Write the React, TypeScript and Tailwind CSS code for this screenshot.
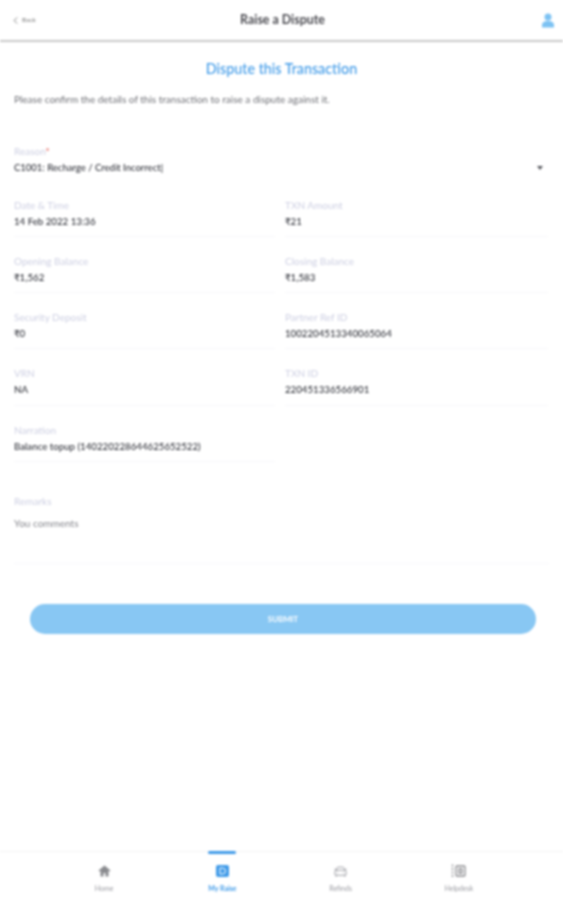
import { ChevronLeft, CarFront } from "lucide-react";

const FIELDS = [
  { label: "Date & Time", value: "14 Feb 2022 13:36" },
  { label: "TXN Amount", value: "₹21" },
  { label: "Opening Balance", value: "₹1,562" },
  { label: "Closing Balance", value: "₹1,583" },
  { label: "Security Deposit", value: "₹0" },
  { label: "Partner Ref ID", value: "1002204513340065064" },
  { label: "VRN", value: "NA" },
  { label: "TXN ID", value: "220451336566901" },
];

function Field({ label, value }: { label: string; value: string }) {
  return (
    <div className="h-[56.25px] border-b border-[#f7f7fa] pt-[18px]">
      <p className="text-[10px] leading-[12px] text-[#cdcfe2]">{label}</p>
      <p className="mt-[4px] text-[9.7px] font-medium leading-[13px] text-[#30323a]">{value}</p>
    </div>
  );
}

function NavItem({
  label,
  active,
  children,
}: {
  label: string;
  active?: boolean;
  children: React.ReactNode;
}) {
  return (
    <div className="relative flex flex-col items-center pt-[11px]">
      {active && (
        <span className="absolute left-1/2 top-[-1px] h-[2.5px] w-[28px] -translate-x-1/2 rounded-full bg-[#3f9ae8]" />
      )}
      <div className="flex h-[16px] items-center justify-center">{children}</div>
      <p
        className={
          active
            ? "mt-[3px] text-[7px] font-bold leading-[12px] text-[#3f9ae8]"
            : "mt-[3px] text-[7px] leading-[12px] text-[#9a9ba1]"
        }
      >
        {label}
      </p>
    </div>
  );
}

export default function App() {
  return (
    <div className="flex h-[900px] w-[563px] flex-col overflow-hidden bg-white font-['Lato',sans-serif] blur-[0.9px]">
      <header className="flex h-[42px] shrink-0 items-center justify-between border-b-2 border-[#c9c9c9] pl-[10px] pr-[8px]">
        <div className="flex w-[60px] items-center gap-[1px] text-[#7a7a7a]">
          <ChevronLeft size={11} strokeWidth={2} />
          <span className="text-[6.5px]">Back</span>
        </div>
        <h1 className="text-[12.4px] font-bold text-[#4a4a50]">Raise a Dispute</h1>
        <div className="flex w-[60px] justify-end">
          <svg width="14" height="15" viewBox="0 0 14 15" fill="#7cc2f3">
            <circle cx="7" cy="4" r="3.5" />
            <path d="M1 14.500v-2.500c0-2.500 2.500-4 6-4s6 1.500 6 4v2.500z" />
          </svg>
        </div>
      </header>

      <main className="flex-1 px-[14px]">
        <h2 className="mt-[17px] text-center text-[14.3px] font-medium leading-[20px] text-[#3f9ae8]">
          Dispute this Transaction
        </h2>
        <p className="mt-[14px] text-[10px] leading-[12px] text-[#6f7076]">
          Please confirm the details of this transaction to raise a dispute against it.
        </p>

        <div className="mt-[40px] pr-[3px]">
          <p className="text-[10px] leading-[12px] text-[#cdcfe2]">
            Reason<span className="text-[#e0594f]">*</span>
          </p>
          <div className="mt-[4px] flex items-center justify-between">
            <p className="text-[9.5px] font-medium leading-[13px] text-[#30323a]">
              C1001: Recharge / Credit Incorrect|
            </p>
            <span className="mr-[3px] h-0 w-0 border-x-[3px] border-t-[4px] border-x-transparent border-t-[#55565c]" />
          </div>
        </div>

        <div className="mt-[6.5px] grid grid-cols-[261px_263px] gap-x-[10px]">
          {FIELDS.map((f) => (
            <Field key={f.label} label={f.label} value={f.value} />
          ))}
          <Field label="Narration" value="Balance topup (140220228644625652522)" />
        </div>

        <div className="mt-[33px] h-[69px] border-b border-[#f8f8fb]">
          <p className="text-[10px] leading-[12px] text-[#cdcfe2]">Remarks</p>
          <p className="mt-[10px] text-[10px] leading-[12px] text-[#85868c]">You comments</p>
        </div>

        <button className="ml-[16px] mt-[40px] flex h-[30px] w-[506px] items-center justify-center rounded-full bg-[#88c7f3] text-[8px] font-bold text-white">
          SUBMIT
        </button>
      </main>

      <nav className="grid h-[49px] shrink-0 grid-cols-4 border-t border-[#f3f3f3] px-[45px]">
        <NavItem label="Home">
          <svg width="13" height="12" viewBox="0 0 13 12" fill="#8a8b8f">
            <path d="M6.500 0.500 0.500 5.500l1 1 1-.8V11.500h3V8h2v3.500h3V5.700l1 .8 1-1z" />
          </svg>
        </NavItem>
        <NavItem label="My Raise" active>
          <span className="flex h-[12px] w-[13px] items-center justify-center rounded-[2px] bg-[#3f9ae8]">
            <svg width="7" height="8" viewBox="0 0 7 8" fill="none">
              <path d="M1 1h2.500a3 3 0 0 1 0 6H1z" stroke="#fff" strokeWidth="1" />
            </svg>
          </span>
        </NavItem>
        <NavItem label="Refinds">
          <CarFront size={15} strokeWidth={1.5} className="text-[#9a9ba1]" />
        </NavItem>
        <NavItem label="Helpdesk">
          <svg width="15" height="14" viewBox="0 0 15 14" fill="none" stroke="#8a8b8f" strokeWidth="1.3">
            <path d="M1.500 0.500v13" strokeDasharray="2 1.500" />
            <rect x="5" y="2" width="9" height="10" rx="1" />
            <path d="M8 5h3v4H8z" />
          </svg>
        </NavItem>
      </nav>
    </div>
  );
}
